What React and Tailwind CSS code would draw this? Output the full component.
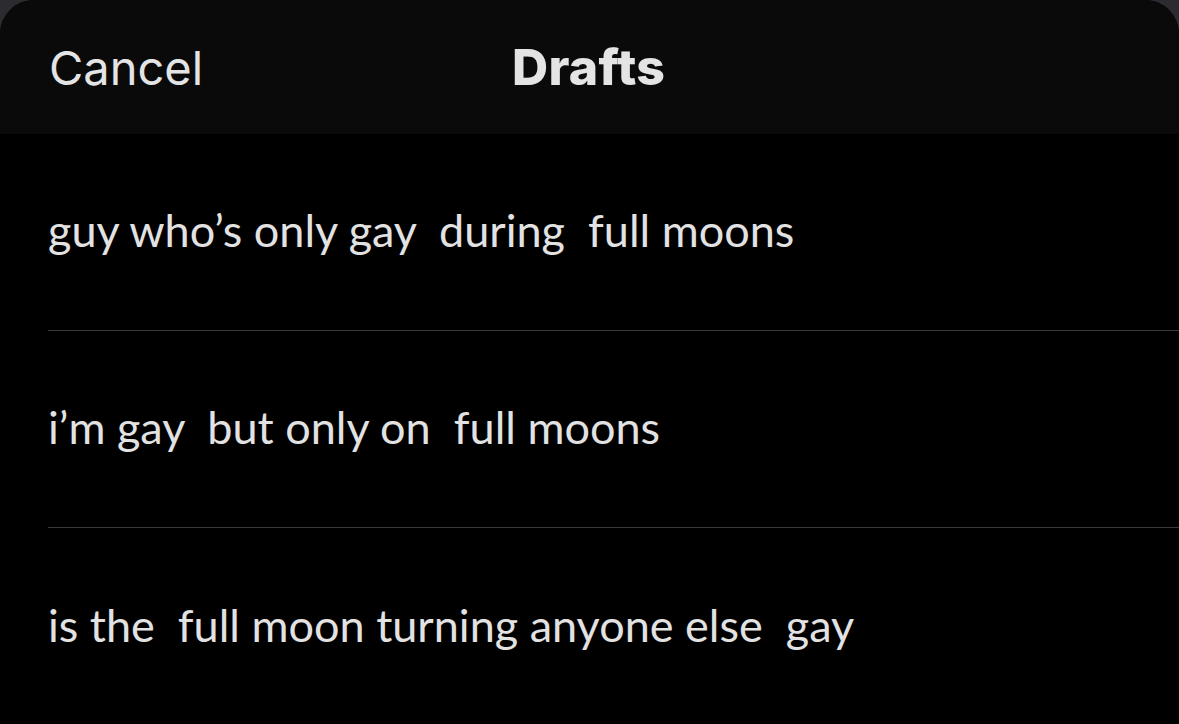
import React from "react";

const rows = [
  "guy who\u2019s only gay\u00a0 during\u00a0 full moons",
  "i\u2019m gay\u00a0 but only on\u00a0 full moons",
  "is the\u00a0 full moon turning anyone else\u00a0 gay",
];

export default function App() {
  return (
    <div className="w-[1179px] h-[724px] bg-[#2c2c30] overflow-hidden">
      <div className="h-full bg-black rounded-t-[34px] overflow-hidden flex flex-col">
        <div className="h-[134px] shrink-0 bg-[#0a0a0b] flex items-center relative">
          <span
            className="ml-[49px] text-[47px] text-[#e4e4e4] leading-none"
            style={{ fontFamily: "Inter, 'Liberation Sans', sans-serif" }}
          >
            Cancel
          </span>
          <span
            className="absolute left-[512px] text-[50px] font-extrabold text-[#e4e4e4] leading-none tracking-[0.3px]"
            style={{ fontFamily: "Inter, 'Liberation Sans', sans-serif" }}
          >
            Drafts
          </span>
        </div>
        <div className="flex flex-col pl-[48px]" style={{ fontFamily: "Lato, 'Noto Sans', sans-serif" }}>
          {rows.map((t, i) => (
            <div
              key={i}
              className={`h-[197px] shrink-0 flex items-center pb-[3px] ${i < rows.length - 1 ? "border-b border-[#3a3a3d]" : ""}`}
            >
              <span className="text-[45px] text-[#e2e2e2] leading-none">{t}</span>
            </div>
          ))}
        </div>
      </div>
    </div>
  );
}
